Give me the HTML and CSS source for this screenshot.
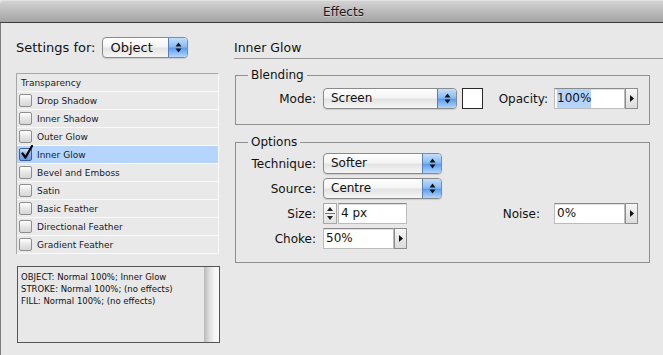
FILE: index.html
```html
<!DOCTYPE html>
<html lang="en">
<head>
    <meta charset="UTF-8">
    <title>Effects</title>
    <link rel="stylesheet" href="styles.css">
</head>
<body>

    <div class="titlebar">Effects</div>

    <div class="content">
        <!-- Left column: target picker, effect list, summary -->
        <div class="left">
            <div class="settings">
                <span class="settings-label">Settings for:</span>
                <div class="select select-object">
                    <span class="select-value">Object</span>
                    <span class="stepper">
                        <svg width="7" height="13" viewBox="0 0 7 13"><path d="M3.5 1.5 L6.5 5.5 H0.5 Z M3.5 11.5 L6.5 7.5 H0.5 Z" fill="#111"/></svg>
                    </span>
                </div>
            </div>

            <ul class="effects-list">
                <li class="effect effect-plain">Transparency</li>
                <li class="effect"><span class="checkbox"></span>Drop Shadow</li>
                <li class="effect"><span class="checkbox"></span>Inner Shadow</li>
                <li class="effect"><span class="checkbox"></span>Outer Glow</li>
                <li class="effect selected">
                    <span class="checkbox checked">
                        <svg class="checkmark" width="16" height="16" viewBox="0 0 16 16"><path d="M3.5 8.5 L6.5 12.5 L13 1" fill="none" stroke="#000" stroke-width="2.2" stroke-linecap="round" stroke-linejoin="round"/></svg>
                    </span>Inner Glow
                </li>
                <li class="effect"><span class="checkbox"></span>Bevel and Emboss</li>
                <li class="effect"><span class="checkbox"></span>Satin</li>
                <li class="effect"><span class="checkbox"></span>Basic Feather</li>
                <li class="effect"><span class="checkbox"></span>Directional Feather</li>
                <li class="effect"><span class="checkbox"></span>Gradient Feather</li>
            </ul>

            <div class="summary">
                <div class="summary-text">
                    OBJECT: Normal 100%; Inner Glow<br>
                    STROKE: Normal 100%; (no effects)<br>
                    FILL: Normal 100%; (no effects)
                </div>
                <div class="scrollbar"></div>
            </div>
        </div>

        <!-- Right column: settings of the selected effect -->
        <div class="right">
            <h1 class="heading">Inner Glow</h1>

            <fieldset class="group group-blending">
                <legend>Blending</legend>
                <div class="row">
                    <span class="field-label">Mode:</span>
                    <div class="select select-mode">
                        <span class="select-value">Screen</span>
                        <span class="stepper">
                            <svg width="7" height="13" viewBox="0 0 7 13"><path d="M3.5 1.5 L6.5 5.5 H0.5 Z M3.5 11.5 L6.5 7.5 H0.5 Z" fill="#111"/></svg>
                        </span>
                    </div>
                    <span class="swatch"></span>
                    <div class="side-group">
                        <span class="side-label opacity-label">Opacity:</span>
                        <span class="input"><span class="selected-text">100%</span></span>
                        <span class="menu-arrow">
                            <svg width="4" height="7" viewBox="0 0 4 7"><path d="M0 0 L4 3.5 L0 7 Z" fill="#111"/></svg>
                        </span>
                    </div>
                </div>
            </fieldset>

            <fieldset class="group group-options">
                <legend>Options</legend>
                <div class="row">
                    <span class="field-label">Technique:</span>
                    <div class="select select-short">
                        <span class="select-value">Softer</span>
                        <span class="stepper">
                            <svg width="7" height="13" viewBox="0 0 7 13"><path d="M3.5 1.5 L6.5 5.5 H0.5 Z M3.5 11.5 L6.5 7.5 H0.5 Z" fill="#111"/></svg>
                        </span>
                    </div>
                </div>
                <div class="row">
                    <span class="field-label">Source:</span>
                    <div class="select select-short">
                        <span class="select-value">Centre</span>
                        <span class="stepper">
                            <svg width="7" height="13" viewBox="0 0 7 13"><path d="M3.5 1.5 L6.5 5.5 H0.5 Z M3.5 11.5 L6.5 7.5 H0.5 Z" fill="#111"/></svg>
                        </span>
                    </div>
                </div>
                <div class="row">
                    <span class="field-label">Size:</span>
                    <span class="spinner">
                        <svg width="12" height="19" viewBox="0 0 12 19"><path d="M6 3 L9 7 H3 Z M6 16 L9 12 H3 Z" fill="#222"/><path d="M1 9.5 H11" stroke="#777" stroke-width="1"/></svg>
                    </span>
                    <span class="input input-size">4 px</span>
                    <div class="side-group">
                        <span class="side-label noise-label">Noise:</span>
                        <span class="input">0%</span>
                        <span class="menu-arrow">
                            <svg width="4" height="7" viewBox="0 0 4 7"><path d="M0 0 L4 3.5 L0 7 Z" fill="#111"/></svg>
                        </span>
                    </div>
                </div>
                <div class="row">
                    <span class="field-label">Choke:</span>
                    <span class="input">50%</span>
                    <span class="menu-arrow">
                        <svg width="4" height="7" viewBox="0 0 4 7"><path d="M0 0 L4 3.5 L0 7 Z" fill="#111"/></svg>
                    </span>
                </div>
            </fieldset>
        </div>
    </div>

</body>
</html>
```

FILE: styles.css
```css
* {
    box-sizing: border-box;
}

body {
    margin: 0;
    width: 663px;
    height: 355px;
    overflow: hidden;
    font-family: "DejaVu Sans", sans-serif;
    font-size: 12px;
    color: #111;
    background-color: #e8e8e8;
}

.titlebar {
    height: 23px;
    line-height: 22px;
    padding-left: 24px;
    text-align: center;
    font-size: 12px;
    color: #1a1a1a;
    text-shadow: 0 1px 0 rgba(255, 255, 255, 0.4);
    background: linear-gradient(#d2d2d2, #a4a4a4);
    border-top: 1px solid #e2e2e2;
    border-bottom: 1px solid #3c3c3c;
    border-top-left-radius: 4px;
}

.content {
    display: flex;
    height: 332px;
    padding-top: 14px;
    border-left: 1px solid #7c7c7c;
}

/* Left column */

.left {
    width: 204px;
    margin-left: 15px;
}

.settings {
    display: flex;
    align-items: center;
    gap: 7px;
    height: 21px;
}

.settings-label {
    font-size: 13px;
}

.select {
    display: flex;
    height: 21px;
    border: 1px solid #8a8a8a;
    border-radius: 4px;
    overflow: hidden;
    background: linear-gradient(#ffffff, #f4f4f4 45%, #e3e3e3 55%, #f6f6f6);
    box-shadow: 0 1px 1px rgba(0, 0, 0, 0.12);
}

.select-value {
    flex: 1;
    padding-left: 7px;
    line-height: 19px;
}

.select-object .select-value {
    font-size: 13px;
}

.stepper {
    width: 19px;
    display: flex;
    align-items: center;
    justify-content: center;
    border-left: 1px solid #5a7fb6;
    background: linear-gradient(#c3defc, #8bbcf4 45%, #5c9ef0 55%, #b3d6fc);
}

.select-object {
    width: 86px;
}

.effects-list {
    list-style: none;
    margin: 15px 0 0 0;
    padding: 0;
    width: 203px;
    border-top: 1px solid #a7a7a7;
    border-left: 1px solid #a7a7a7;
    border-right: 1px solid #fafafa;
    font-size: 9px;
}

.effect {
    display: flex;
    align-items: center;
    height: 18px;
    padding-left: 2px;
    background-color: #e9e9e9;
    border-bottom: 1px solid #fafafa;
    color: #151a2a;
}

.effect-plain {
    padding-left: 4px;
}

.effect.selected {
    background-color: #b5d5ff;
}

.checkbox {
    position: relative;
    width: 13px;
    height: 13px;
    margin-right: 5px;
    border: 1px solid #8e8e8e;
    border-radius: 2px;
    background: linear-gradient(#ffffff, #e6e6e6 50%, #d6d6d6);
}

.checkbox.checked {
    border-color: #3f5f92;
    background: linear-gradient(#d6e6fb, #86aee6 50%, #6d9ce0);
}

.checkmark {
    position: absolute;
    left: -1px;
    top: -4px;
}

.summary {
    display: flex;
    width: 203px;
    height: 77px;
    margin: 12px 0 0 1px;
    border: 1px solid #555;
}

.summary-text {
    flex: 1;
    padding: 4px 0 0 3px;
    font-size: 8.5px;
    line-height: 12px;
}

.scrollbar {
    width: 15px;
    background: linear-gradient(to right, #b8b8b8, #dedede 35%, #f6f6f6 70%, #fbfbfb);
}

/* Right column */

.right {
    flex: 1;
    margin-left: 14px;
}

.heading {
    margin: 0;
    height: 22px;
    line-height: 21px;
    font-size: 12.5px;
    font-weight: normal;
    border-bottom: 1px solid #999;
}

.group {
    margin: 9px 13px 0 1px;
    padding: 6px 11px 15px 0;
    min-width: 0;
    border: 1px solid #8e8e8e;
}

.group legend {
    margin-left: 12px;
    padding: 0 3px;
    line-height: 14px;
}

.group-options {
    margin-top: 10px;
    padding-top: 4px;
    padding-bottom: 13px;
}

.row {
    display: flex;
    align-items: center;
    height: 21px;
}

.row + .row {
    margin-top: 4px;
}

.field-label {
    width: 80px;
    margin-right: 7px;
    text-align: right;
}

.select-mode {
    width: 134px;
}

.select-short {
    width: 119px;
}

.swatch {
    width: 21px;
    height: 21px;
    margin-left: 5px;
    background-color: #fff;
    border: 1px solid #2a2a2a;
}

.side-group {
    display: flex;
    align-items: center;
    margin-left: auto;
}

.opacity-label {
    margin-right: 6px;
}

.noise-label {
    margin-right: 14px;
}

.input {
    width: 71px;
    height: 21px;
    padding-left: 2px;
    line-height: 19px;
    background-color: #fff;
    border: 1px solid #bcbcbc;
    border-top-color: #8a8a8a;
    box-shadow: inset 0 1px 0 #e0e0e0;
}

.selected-text {
    display: inline-block;
    background-color: #b4d4fc;
}

.input-size {
    width: 69px;
    margin-left: 1px;
}

.menu-arrow {
    display: flex;
    align-items: center;
    justify-content: center;
    width: 13px;
    height: 21px;
    border: 1px solid #8c8c8c;
    background: linear-gradient(#f6f6f6, #dcdcdc);
}

.spinner {
    display: flex;
    width: 14px;
    height: 21px;
    border: 1px solid #a8a8a8;
    background: linear-gradient(#fafafa, #e2e2e2);
}
```
